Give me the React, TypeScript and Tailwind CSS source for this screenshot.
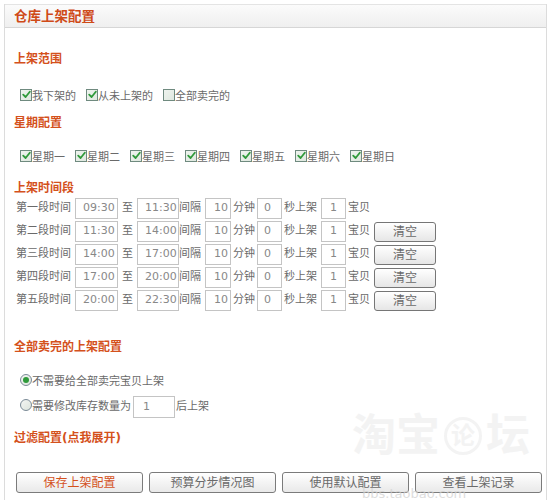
import React from "react";

const FONT = { fontFamily: '"DejaVu Sans", "Noto Sans CJK SC", sans-serif' };

function Check({ checked = true }: { checked?: boolean }) {
  return (
    <span className="mb-[5px] flex h-[12px] w-[12px] shrink-0 items-center justify-center border border-[#6f8a7f] bg-gradient-to-br from-[#eef3ee] to-[#dfe8df]">
      {checked && (
        <svg width="9" height="9" viewBox="0 0 9 9">
          <path d="M1.2 4.6 L3.6 7 L7.8 1.8" fill="none" stroke="#2f9a3a" strokeWidth="1.8" strokeLinecap="round" strokeLinejoin="round" />
        </svg>
      )}
    </span>
  );
}

function Radio({ checked }: { checked?: boolean }) {
  return (
    <span className="mb-[5px] flex h-[12px] w-[12px] shrink-0 items-center justify-center rounded-full border border-[#7a8a96] bg-gradient-to-br from-[#f3f5f3] to-[#dde4dd]">
      {checked && <span className="h-[6px] w-[6px] rounded-full bg-[#2f9a3a]" />}
    </span>
  );
}

function Heading({ children, className = "" }: { children: React.ReactNode; className?: string }) {
  return (
    <div className={"h-[16px] pl-[9px] text-[12px] font-bold leading-[16px] text-[#d4511c] " + className}>
      {children}
    </div>
  );
}

function Box({ w, v, pl = "pl-[7px]" }: { w: string; v: string; pl?: string }) {
  return (
    <span className={"flex h-[21px] items-center overflow-visible whitespace-nowrap border border-[#c4c4c4] bg-white text-[11px] text-[#888] " + w + " " + pl}>
      {v}
    </span>
  );
}

const rows = [
  ["第一段时间", "09:30", "11:30", false],
  ["第二段时间", "11:30", "14:00", true],
  ["第三段时间", "14:00", "17:00", true],
  ["第四段时间", "17:00", "20:00", true],
  ["第五段时间", "20:00", "22:30", true],
] as const;

const days = ["星期一", "星期二", "星期三", "星期四", "星期五", "星期六", "星期日"];

function Btn({ children, orange }: { children: React.ReactNode; orange?: boolean }) {
  return (
    <span
      className={
        "flex h-[21px] w-[127px] items-center justify-center rounded-[3px] border border-[#7b7b7b] bg-gradient-to-b from-[#ffffff] to-[#e9e9e9] text-[12px] " +
        (orange ? "text-[#d4511c]" : "text-[#6a6a6a]")
      }
    >
      {children}
    </span>
  );
}

export default function App() {
  return (
    <div className="relative h-[500px] w-[550px] overflow-hidden bg-white" style={FONT}>
      <div className="ml-[4px] mt-[4px] h-[496px] w-[543px] border-l border-r border-[#dcdcdc]">
        <div className="flex h-[24px] items-center border-t border-b border-t-[#e4e4e4] border-b-[#d6d6d6] bg-gradient-to-b from-[#fbfbfb] to-[#efefef] pl-[9px] text-[13.5px] font-bold text-[#cf4a18]">
          仓库上架配置
        </div>

        <Heading className="mt-[23px]">上架范围</Heading>
        <div className="mt-[22px] flex h-[16px] items-center gap-[10px] pl-[15px] text-[11px] text-[#6a6a6a]">
          <span className="flex items-center"><Check /><span>我下架的</span></span>
          <span className="flex items-center"><Check /><span>从未上架的</span></span>
          <span className="flex items-center"><Check checked={false} /><span>全部卖完的</span></span>
        </div>

        <Heading className="mt-[10px]">星期配置</Heading>
        <div className="mt-[19px] flex h-[16px] items-center gap-[10px] pl-[15px] text-[11px] text-[#6a6a6a]">
          {days.map((d) => (
            <span key={d} className="flex items-center"><Check /><span>{d}</span></span>
          ))}
        </div>

        <Heading className="mt-[14px]">上架时间段</Heading>
        <div className="mt-[1px] flex flex-col">
          {rows.map(([label, a, b, clear]) => (
            <div key={label} className="flex h-[23px] items-center pl-[11px] text-[11px] text-[#6a6a6a]">
              <span className="w-[59px]">{label}</span>
              <Box w="w-[43px]" v={a} />
              <span className="w-[19px] text-center">至</span>
              <Box w="w-[42px]" v={b} />
              <span className="w-[26px]">间隔</span>
              <Box w="w-[26px]" v="10" pl="pl-[8px]" />
              <span className="w-[26px] pl-[2px]">分钟</span>
              <Box w="w-[25px]" v="0" pl="pl-[6px]" />
              <span className="w-[39px] pl-[2px]">秒上架</span>
              <Box w="w-[25px]" v="1" pl="pl-[8px]" />
              <span className="w-[28px] pl-[2px]">宝贝</span>
              {clear && (
                <span className="flex h-[20px] w-[62px] items-center justify-center rounded-[3px] border border-[#767676] bg-gradient-to-b from-[#ffffff] to-[#e6e6e6] text-[12px] text-[#6a6a6a]">
                  清空
                </span>
              )}
            </div>
          ))}
        </div>

        <Heading className="mt-[27px]">全部卖完的上架配置</Heading>
        <div className="mt-[19px] flex h-[16px] items-center pl-[15px] text-[11px] text-[#6a6a6a]">
          <Radio checked />
          <span>不需要给全部卖完宝贝上架</span>
        </div>
        <div className="mt-[6px] flex h-[22px] items-center pl-[15px] text-[11px] text-[#6a6a6a]">
          <Radio />
          <span>需要修改库存数量为</span>
          <span className="ml-[2px] flex h-[22px] w-[42px] items-center border border-[#c4c4c4] pl-[9px] text-[#888]">1</span>
          <span className="ml-[1px]">后上架</span>
        </div>

        <Heading className="mt-[12px]">过滤配置(点我展开)</Heading>

        <div className="mt-[26px] flex gap-[6px] pl-[11px]">
          <Btn orange>保存上架配置</Btn>
          <Btn>预算分步情况图</Btn>
          <Btn>使用默认配置</Btn>
          <Btn>查看上架记录</Btn>
        </div>
      </div>

      <div className="pointer-events-none absolute left-[352px] top-[414px] flex items-center gap-[4px] text-[44px] font-bold leading-none text-[#efefef] opacity-70">
        <span>淘宝</span>
        <span className="flex h-[38px] w-[38px] items-center justify-center rounded-full border-[3px] border-[#efefef] text-[24px]">论</span>
        <span>坛</span>
      </div>
      <div className="pointer-events-none absolute left-[362px] top-[487px] text-[13px] leading-none text-[#d0d0d0] opacity-70">
        bbs.taobao.com
      </div>
    </div>
  );
}
